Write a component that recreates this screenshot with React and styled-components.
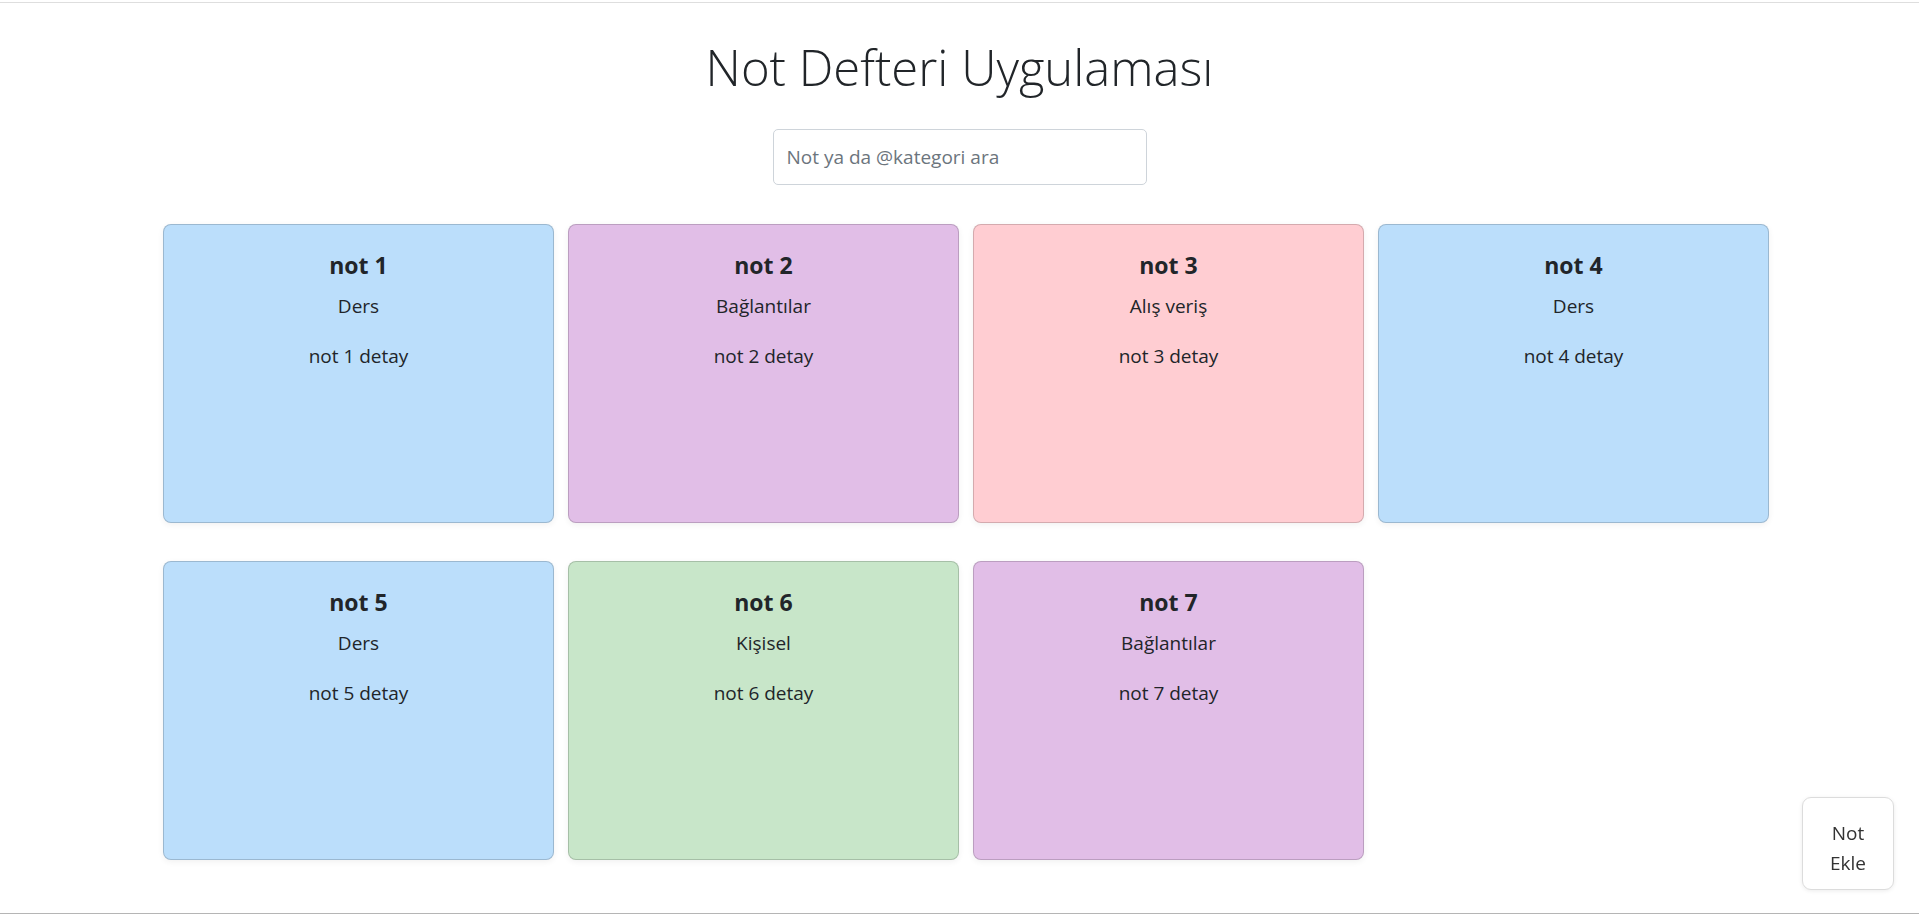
import styled, { createGlobalStyle } from "styled-components";

const GlobalStyle = createGlobalStyle`
  html, body {
    margin: 0;
    padding: 0;
    background: #fff;
  }
  body {
    font-family: "Open Sans", "Noto Sans", sans-serif;
    color: #212529;
  }
  * { box-sizing: border-box; }
`

const Frame = styled.div`
  margin-top: 2px;
  height: 912px;
  border-top: 1px solid #dedede;
  border-bottom: 1px solid #b5b5b5;
  display: flex;
  flex-direction: column;
`

const Header = styled.header`
  display: flex;
  flex-direction: column;
  align-items: center;
`

const Title = styled.h1`
  margin: 35px 0 0;
  font-size: 49px;
  font-weight: 300;
  line-height: 1.2;
`

const Search = styled.input`
  margin-top: 32px;
  width: 374px;
  height: 56px;
  padding: 0 13px;
  border: 1px solid #ced4da;
  border-radius: 5px;
  font-family: inherit;
  font-size: 19px;
  color: #495057;
  outline: none;

  &::placeholder {
    color: #6c757d;
  }
`

const Grid = styled.div`
  margin-top: 39px;
  padding: 0 150px 0 163px;
  display: grid;
  grid-template-columns: repeat(4, 391px);
  column-gap: 14px;
  row-gap: 38px;
`

const palette = {
  blue: "#bbdefb",
  purple: "#e1bee7",
  pink: "#ffcdd2",
  green: "#c8e6c9",
}

const Card = styled.div`
  height: 299px;
  padding: 26px 16px 16px;
  background: ${(p) => palette[p.$tone]};
  border: 1px solid rgba(0, 0, 0, 0.17);
  border-radius: 8px;
  box-shadow: 0 2px 6px rgba(0, 0, 0, 0.06);
  text-align: center;
`

const CardTitle = styled.h5`
  margin: 0 0 12px;
  font-size: 23px;
  font-weight: 700;
  line-height: 28px;
`

const Category = styled.p`
  margin: 0 0 20px;
  font-size: 19px;
  line-height: 30px;
`

const Detail = styled.p`
  margin: 0;
  font-size: 19px;
  line-height: 30px;
`

const AddButton = styled.button`
  position: fixed;
  right: 25px;
  bottom: 25px;
  width: 92px;
  height: 93px;
  padding: 9px 14px 0;
  background: #fff;
  border: 1px solid #dcdcdc;
  border-radius: 9px;
  box-shadow: 0 1px 4px rgba(0, 0, 0, 0.08);
  font-family: inherit;
  font-size: 19px;
  line-height: 30px;
  color: #333;
  cursor: pointer;
`

const notes = [
  { id: 1, category: "Ders", tone: "blue" },
  { id: 2, category: "Bağlantılar", tone: "purple" },
  { id: 3, category: "Alış veriş", tone: "pink" },
  { id: 4, category: "Ders", tone: "blue" },
  { id: 5, category: "Ders", tone: "blue" },
  { id: 6, category: "Kişisel", tone: "green" },
  { id: 7, category: "Bağlantılar", tone: "purple" },
]

const App = () => {
  return (
    <>
      <GlobalStyle />
      <Frame>
        <Header>
          <Title>Not Defteri Uygulaması</Title>
          <Search type="text" placeholder="Not ya da @kategori ara" />
        </Header>
        <Grid>
          {notes.map((n) => (
            <Card key={n.id} $tone={n.tone}>
              <CardTitle>not {n.id}</CardTitle>
              <Category>{n.category}</Category>
              <Detail>not {n.id} detay</Detail>
            </Card>
          ))}
        </Grid>
      </Frame>
      <AddButton>Not Ekle</AddButton>
    </>
  );
}

export default App;
